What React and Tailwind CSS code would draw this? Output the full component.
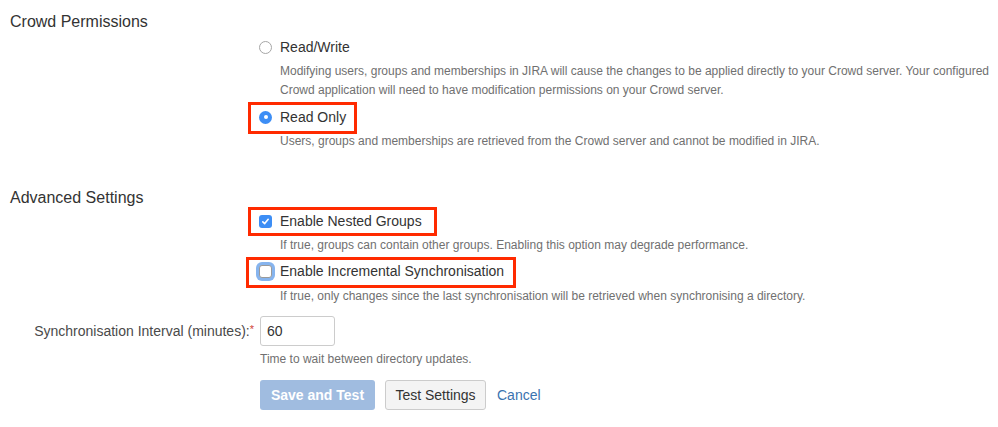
import React, { useState } from 'react';

const Radio = ({ checked }) => (
  checked ? (
    <span className="w-[13px] h-[13px] rounded-full bg-[#3d8ef5] flex items-center justify-center">
      <span className="w-[4px] h-[4px] rounded-full bg-white"></span>
    </span>
  ) : (
    <span className="w-[13px] h-[13px] rounded-full bg-white border border-[#a6a6a6]"></span>
  )
);

const Checkbox = ({ checked, focused }) => (
  checked ? (
    <span className="w-[13px] h-[13px] rounded-[3px] bg-[#3d8ef5] flex items-center justify-center">
      <svg width="9" height="9" viewBox="0 0 9 9" fill="none">
        <path d="M1.8 4.8 L3.7 6.6 L7.2 2.3" stroke="white" strokeWidth="1.6" strokeLinecap="round" strokeLinejoin="round" />
      </svg>
    </span>
  ) : (
    <span className={`w-[13px] h-[13px] rounded-[3px] bg-white border border-[#9a9a9a] ${focused ? 'ring-[3px] ring-[#86b4ee]' : ''}`}></span>
  )
);

// red annotation frame drawn over a row
const Highlight = ({ className }) => (
  <span className={`absolute border-[3px] border-[#ff2a00] pointer-events-none ${className}`}></span>
);

const Option = ({ control, label, highlight }) => (
  <div className="relative flex items-center h-[20px] text-[14px] leading-[20px] text-[#333]">
    <span className="w-[20px] -ml-[1px] flex items-center">{control}</span>
    <span className="ml-[1px]">{label}</span>
    {highlight}
  </div>
);

const Desc = ({ children, className = '' }) => (
  <div className={`pl-[20px] text-[12px] leading-[19px] text-[#707070] whitespace-nowrap ${className}`}>{children}</div>
);

export default function App() {
  const [interval, setInterval] = useState('60');

  return (
    <div className="w-[998px] h-[427px] overflow-hidden bg-white text-[#333] font-['Liberation_Sans',Arial,sans-serif]">
      <h2 className="pl-[10px] pt-[12px] text-[16px] leading-[20px] font-normal">Crowd Permissions</h2>

      <div className="pl-[260px] mt-[5px]">
        <Option control={<Radio />} label="Read/Write" />
        <Desc className="mt-[5px]">
          Modifying users, groups and memberships in JIRA will cause the changes to be applied directly to your Crowd server. Your configured
          <br />
          Crowd application will need to have modification permissions on your Crowd server.
        </Desc>
        <div className="mt-[7px]">
          <Option
            control={<Radio checked />}
            label="Read Only"
            highlight={<Highlight className="-left-[12px] -top-[5px] w-[109px] h-[32px]" />}
          />
        </div>
        <Desc className="mt-[5px]">Users, groups and memberships are retrieved from the Crowd server and cannot be modified in JIRA.</Desc>
      </div>

      <h2 className="pl-[10px] mt-[37px] text-[16px] leading-[20px] font-normal">Advanced Settings</h2>

      <div className="pl-[260px] mt-[3px]">
        <Option
          control={<Checkbox checked />}
          label="Enable Nested Groups"
          highlight={<Highlight className="-left-[12px] -top-[4px] w-[189px] h-[29px]" />}
        />
        <Desc className="mt-[5px]">If true, groups can contain other groups. Enabling this option may degrade performance.</Desc>
        <div className="mt-[6px]">
          <Option
            control={<Checkbox focused />}
            label="Enable Incremental Synchronisation"
            highlight={<Highlight className="-left-[14px] -top-[4px] w-[270px] h-[31px]" />}
          />
        </div>
        <Desc className="mt-[6px]">If true, only changes since the last synchronisation will be retrieved when synchronising a directory.</Desc>
      </div>

      <div className="grid grid-cols-[260px_1fr] mt-[10px]">
        <label className="text-right pr-[6px] pt-[5px] text-[14px] leading-[20px] text-[#4a4a4a]">
          Synchronisation Interval (minutes):<span className="text-[#d04437] text-[11px] align-top relative -top-[2px]">*</span>
        </label>
        <div>
          <input
            value={interval}
            onChange={e => setInterval(e.target.value)}
            className="w-[75px] h-[30px] border border-[#cccccc] rounded-[3px] px-[6px] text-[14px] text-[#333] outline-none"
          />
          <div className="mt-[3px] text-[12px] leading-[20px] text-[#707070]">Time to wait between directory updates.</div>
          <div className="mt-[11px] flex items-center gap-[10px]">
            <button className="h-[30px] w-[115px] rounded-[3px] bg-[#a0bce0] text-white text-[14px] font-bold">Save and Test</button>
            <button className="h-[30px] w-[101px] rounded-[3px] bg-[#f4f4f4] border border-[#cccccc] text-[#333] text-[14px]">Test Settings</button>
            <a href="#" className="ml-[1px] text-[14px] text-[#3b73af]">Cancel</a>
          </div>
        </div>
      </div>
    </div>
  );
}
